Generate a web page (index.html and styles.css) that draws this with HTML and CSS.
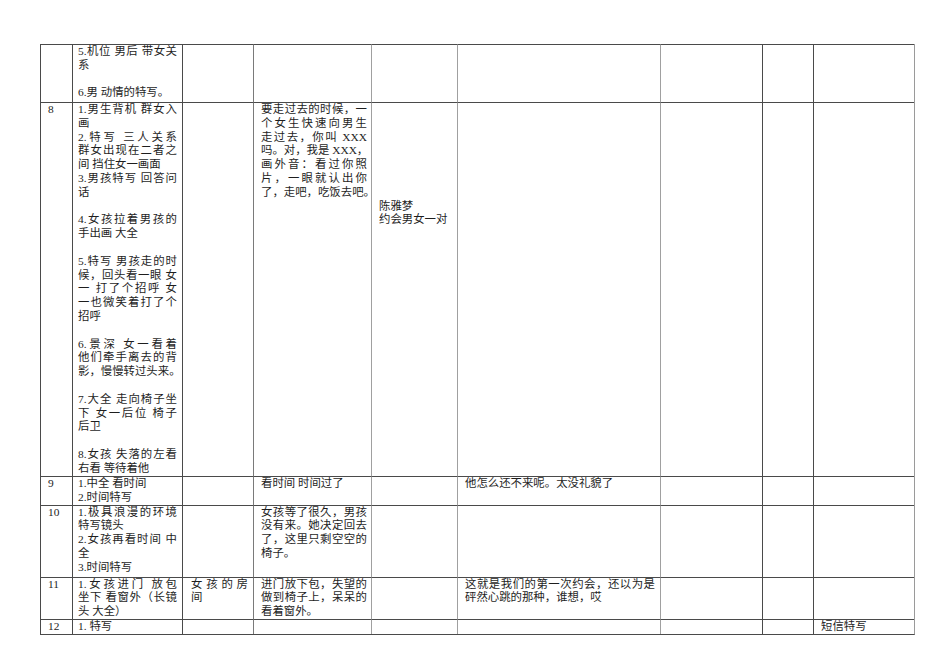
FILE: index.html
```html
<!DOCTYPE html>
<html lang="zh-CN">
<head>
<meta charset="utf-8">
<title>分镜头脚本</title>
<link rel="stylesheet" href="styles.css">
</head>
<body>
<table class="script">
  <colgroup>
    <col class="w1"><col class="w2"><col class="w3"><col class="w4"><col class="w5"><col class="w6"><col class="w7"><col class="w8"><col class="w9">
  </colgroup>
  <tbody>
    <tr class="r0">
      <td class="c1"></td>
      <td class="c2"><span class="ln j">5.机位 男后 带女关</span><span class="ln">系</span><span class="ln">&nbsp;</span><span class="ln">6.男 动情的特写。</span></td>
      <td class="c3"></td><td class="c4"></td><td class="c5"></td><td class="c6"></td><td class="c7"></td><td class="c8"></td><td class="c9"></td>
    </tr>
    <tr class="r8">
      <td class="c1">8</td>
      <td class="c2"><span class="ln j">1.男生背机 群女入</span><span class="ln">画</span><span class="ln j">2.特写 三人关系</span><span class="ln j">群女出现在二者之</span><span class="ln">间 挡住女一画面</span><span class="ln j">3.男孩特写 回答问</span><span class="ln">话</span><span class="ln">&nbsp;</span><span class="ln j">4.女孩拉着男孩的</span><span class="ln">手出画 大全</span><span class="ln">&nbsp;</span><span class="ln j">5.特写 男孩走的时</span><span class="ln j">候，回头看一眼 女</span><span class="ln j">一 打了个招呼 女</span><span class="ln j">一也微笑着打了个</span><span class="ln">招呼</span><span class="ln">&nbsp;</span><span class="ln j">6.景深 女一看着</span><span class="ln j">他们牵手离去的背</span><span class="ln">影，慢慢转过头来。</span><span class="ln">&nbsp;</span><span class="ln j">7.大全 走向椅子坐</span><span class="ln j">下 女一后位 椅子</span><span class="ln">后卫</span><span class="ln">&nbsp;</span><span class="ln j">8.女孩 失落的左看</span><span class="ln">右看 等待着他</span></td>
      <td class="c3"></td>
      <td class="c4"><span class="ln j">要走过去的时候，一</span><span class="ln j">个女生快速向男生</span><span class="ln j">走过去，你叫 XXX</span><span class="ln j">吗。对，我是 XXX，</span><span class="ln j">画外音：看过你照</span><span class="ln j">片，一眼就认出你</span><span class="ln">了，走吧，吃饭去吧。</span></td>
      <td class="c5"><span class="ln">&nbsp;</span><span class="ln">&nbsp;</span><span class="ln">&nbsp;</span><span class="ln">&nbsp;</span><span class="ln">&nbsp;</span><span class="ln">&nbsp;</span><span class="ln">&nbsp;</span><span class="ln">陈雅梦</span><span class="ln">约会男女一对</span></td>
      <td class="c6"></td><td class="c7"></td><td class="c8"></td><td class="c9"></td>
    </tr>
    <tr class="r9">
      <td class="c1">9</td>
      <td class="c2"><span class="ln">1.中全 看时间</span><span class="ln">2.时间特写</span></td>
      <td class="c3"></td>
      <td class="c4"><span class="ln">看时间 时间过了</span></td>
      <td class="c5"></td>
      <td class="c6"><span class="ln">他怎么还不来呢。太没礼貌了</span></td>
      <td class="c7"></td><td class="c8"></td><td class="c9"></td>
    </tr>
    <tr class="r10">
      <td class="c1">10</td>
      <td class="c2"><span class="ln j">1.极具浪漫的环境</span><span class="ln">特写镜头</span><span class="ln j">2.女孩再看时间 中</span><span class="ln">全</span><span class="ln">3.时间特写</span></td>
      <td class="c3"></td>
      <td class="c4"><span class="ln j">女孩等了很久，男孩</span><span class="ln j">没有来。她决定回去</span><span class="ln j">了，这里只剩空空的</span><span class="ln">椅子。</span></td>
      <td class="c5"></td><td class="c6"></td><td class="c7"></td><td class="c8"></td><td class="c9"></td>
    </tr>
    <tr class="r11">
      <td class="c1">11</td>
      <td class="c2"><span class="ln j">1.女孩进门 放包</span><span class="ln j">坐下 看窗外（长镜</span><span class="ln">头 大全）</span></td>
      <td class="c3 room"><span class="ln j">女孩的房</span><span class="ln">间</span></td>
      <td class="c4"><span class="ln j">进门放下包，失望的</span><span class="ln j">做到椅子上，呆呆的</span><span class="ln">看着窗外。</span></td>
      <td class="c5"></td>
      <td class="c6"><span class="ln j">这就是我们的第一次约会，还以为是</span><span class="ln">砰然心跳的那种，谁想，哎</span></td>
      <td class="c7"></td><td class="c8"></td><td class="c9"></td>
    </tr>
    <tr class="r12">
      <td class="c1">12</td>
      <td class="c2"><span class="ln">1. 特写</span></td>
      <td class="c3"></td><td class="c4"></td><td class="c5"></td><td class="c6"></td><td class="c7"></td><td class="c8"></td>
      <td class="c9"><span class="ln">短信特写</span></td>
    </tr>
  </tbody>
</table>
</body>
</html>
```
FILE: styles.css
```css
html, body {
  margin: 0;
  padding: 0;
  background: #ffffff;
}
body {
  font-family: "Liberation Serif", "Noto Sans CJK SC", serif;
  font-size: 11.4px;
  line-height: 13.8px;
  color: #1e1e1e;
}
.script {
  margin: 44px 0 0 40px;
  border-collapse: separate;
  border-spacing: 0;
  table-layout: fixed;
  width: 875px;
  border-right: 1px solid #9a9a9a;
  border-bottom: 1px solid #4a4a4a;
}
.w1 { width: 32px; }
.w2 { width: 110px; }
.w3 { width: 71px; }
.w4 { width: 118px; }
.w5 { width: 86px; }
.w6 { width: 203px; }
.w7 { width: 102px; }
.w8 { width: 51px; }
.w9 { width: 101px; }
.script td {
  vertical-align: top;
  padding: 0 5px 0 7px;
  border-top: 1px solid #4a4a4a;
  border-left: 1px solid #4a4a4a;
  overflow: visible;
}
.script td.c2 { padding: 0 5px 0 5px; }
.script td.c4 { padding: 0 4px 0 7px; }
.script td.c3.room { padding: 0 5px 0 8px; }
.script td.c4 { border-left-color: #7a7a7a; }
.script td.c5,
.script td.c6,
.script td.c7 { border-left-color: #a0a0a0; }
.ln {
  display: block;
  white-space: nowrap;
  text-align: left;
}
.ln.j {
  text-align: justify;
  text-align-last: justify;
}
.r0 td { height: 57px; }
.r8 td { height: 373px; }
.r9 td { height: 27px; }
.r10 td { height: 71px; }
.r11 td { height: 41px; }
.r12 td { height: 14px; }
```
